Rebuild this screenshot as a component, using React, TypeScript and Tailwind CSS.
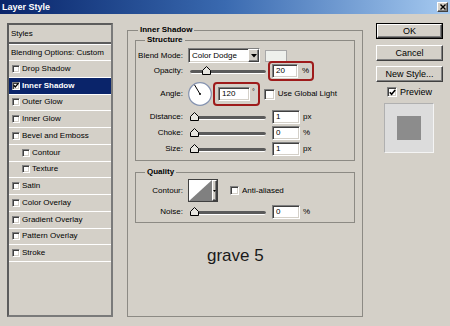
import React from 'react';

const sunken =
  'bg-white border border-t-[#808080] border-l-[#808080] border-r-white border-b-white shadow-[inset_1px_1px_0_#404040,inset_-1px_-1px_0_#d4d0c8]';
const raised =
  'bg-[#d4d0c8] border border-t-white border-l-white border-r-[#404040] border-b-[#404040] shadow-[inset_-1px_-1px_0_#808080]';

const styleRows = [
  { name: 'Drop Shadow' },
  { name: 'Inner Shadow', checked: true, active: true },
  { name: 'Outer Glow' },
  { name: 'Inner Glow' },
  { name: 'Bevel and Emboss' },
  { name: 'Contour', sub: true },
  { name: 'Texture', sub: true },
  { name: 'Satin' },
  { name: 'Color Overlay' },
  { name: 'Gradient Overlay' },
  { name: 'Pattern Overlay' },
  { name: 'Stroke' },
];

function CheckBox({ checked = false, size = 'w-[9px] h-[9px]' }: { checked?: boolean; size?: string }) {
  return (
    <div className={`${sunken} ${size} shrink-0 flex items-center justify-center`}>
      {checked && (
        <svg width="7" height="7" viewBox="0 0 7 7">
          <path d="M0.8 3.2 L2.6 5.2 L6.2 1" fill="none" stroke="#000" strokeWidth="1.6" />
        </svg>
      )}
    </div>
  );
}

function Field({ value, w = 'w-[28px]' }: { value: string; w?: string }) {
  return <div className={`${sunken} ${w} h-[14px] flex items-center pl-[3px] text-[8px] leading-none`}>{value}</div>;
}

function Slider({ pos }: { pos: number }) {
  return (
    <div className="relative h-[10px] w-[76px]">
      <div className="absolute left-0 right-0 top-[4px] h-[4px] rounded-[2px] bg-[#5a5a5a] border-b border-b-white" />
      <svg className="absolute top-[0px]" style={{ left: pos }} width="9" height="9" viewBox="0 0 9 9">
        <path d="M0.5 8.5 V4.5 L4.5 0.5 L8.5 4.5 V8.5 Z" fill="#e8e6e0" stroke="#000" />
      </svg>
    </div>
  );
}

function Row({ label, className = '', children }: { label: string; className?: string; children: React.ReactNode }) {
  return (
    <div className={`flex items-center ${className}`}>
      <div className="w-[47px] text-right shrink-0">{label}</div>
      {children}
    </div>
  );
}

function SliderRow({ label, value, unit, pos = 0, className = '' }: { label: string; value: string; unit: string; pos?: number; className?: string }) {
  return (
    <Row label={label} className={className}>
      <div className="ml-[7px]">
        <Slider pos={pos} />
      </div>
      <div className="ml-[6px]">
        <Field value={value} />
      </div>
      <span className="ml-[3px]">{unit}</span>
    </Row>
  );
}

export default function App() {
  return (
    <div className="w-[450px] h-[326px] bg-[#d4d0c8] text-black text-[8px] leading-[10px] font-['Liberation_Sans',Arial,sans-serif] overflow-hidden">
      {/* title bar */}
      <div className="h-[14px] flex items-center bg-gradient-to-r from-[#0a246a] via-[#3a6ab0] to-[#a6caf0] pl-[2px] pr-[2px]">
        <span className="text-white font-bold text-[9px] leading-none">Layer Style</span>
        <div className={`${raised} ml-auto w-[11px] h-[10px] flex items-center justify-center`}>
          <svg width="6" height="6" viewBox="0 0 6 6">
            <path d="M0.5 0.5 L5.5 5.5 M5.5 0.5 L0.5 5.5" stroke="#000" strokeWidth="1.4" />
          </svg>
        </div>
      </div>

      <div className="flex items-start pl-[7px] pt-[9px]">
        {/* styles list */}
        <div className="w-[106px] h-[294px] border-2 border-[#5c5c5c] border-r-[#7a7a7a] border-b-[#7a7a7a] flex flex-col">
          <div className="h-[19px] flex items-center pl-[2px] border-b-2 border-[#5c5c5c] shadow-[0_1px_0_#fff]">Styles</div>
          <div className="h-[16px] flex items-center pl-[2px] border-b border-white mt-[1px]">Blending Options: Custom</div>
          {styleRows.map((r) => (
            <div
              key={r.name}
              className={`h-[16.75px] flex items-center gap-[2px] border-b border-white ${r.sub ? 'pl-[13px]' : 'pl-[3px]'} ${
                r.active ? 'bg-[#0a246a] text-white font-bold' : ''
              }`}
            >
              <CheckBox checked={r.checked} size="w-[8px] h-[8px]" />
              <span>{r.name}</span>
            </div>
          ))}
        </div>

        {/* main panel */}
        <fieldset className="ml-[14px] mt-[2px] w-[236px] h-[292px] border border-[#8c8a84] px-[7px]">
          <legend className="ml-[3px] px-[2px] font-bold leading-[10px]">Inner Shadow</legend>

          <fieldset className="w-full border border-[#8c8a84]">
            <legend className="ml-[9px] px-[2px] font-bold leading-[10px]">Structure</legend>
            <div className="pt-[3px] pb-[4px] flex flex-col">
              <Row label="Blend Mode:" className="h-[15px]">
                <div className={`${sunken} ml-[5px] w-[72px] h-[15px] flex items-center`}>
                  <span className="pl-[3px] flex-1">Color Dodge</span>
                  <div className={`${raised} w-[11px] h-[13px] flex items-center justify-center`}>
                    <svg width="6" height="4" viewBox="0 0 6 4">
                      <path d="M0 0 H6 L3 3.5 Z" fill="#000" />
                    </svg>
                  </div>
                </div>
                <div className="ml-[5px] w-[22px] h-[12px] border border-[#a8a8a8] bg-[#eef0ec]" />
              </Row>

              <Row label="Opacity:" className="h-[16px]">
                <div className="ml-[7px]">
                  <Slider pos={12} />
                </div>
                <div className="ml-[2px] border-2 border-[#9e1b1b] rounded-[4px] pl-[2px] pr-[3px] py-[1px] flex items-center">
                  <Field value="20" w="w-[26px]" />
                  <span className="ml-[4px]">%</span>
                </div>
              </Row>

              <Row label="Angle:" className="h-[24px] mt-[3px]">
                <svg className="ml-[5px] shrink-0" width="24" height="24" viewBox="0 0 24 24">
                  <circle cx="12" cy="12" r="11.3" fill="#fff" stroke="#8593b0" strokeWidth="1.2" />
                  <path d="M12 12 L6.5 2.8" stroke="#000" strokeWidth="1" />
                  <circle cx="12" cy="12" r="1" fill="#000" />
                </svg>
                <div className="ml-[1px] h-[24px] border-2 border-[#9e1b1b] rounded-[4px] pl-[3px] pr-[3px] flex items-center">
                  <Field value="120" w="w-[32px]" />
                  <span className="ml-[2px] self-start mt-[4px] text-[7px] leading-none">°</span>
                </div>
                <div className="ml-[4px]">
                  <CheckBox size="w-[11px] h-[11px]" />
                </div>
                <span className="ml-[3px] whitespace-nowrap">Use Global Light</span>
              </Row>

              <SliderRow label="Distance:" value="1" unit="px" className="h-[16px] mt-[3px]" />
              <SliderRow label="Choke:" value="0" unit="%" className="h-[16px]" />
              <SliderRow label="Size:" value="1" unit="px" className="h-[15px]" />
            </div>
          </fieldset>

          <fieldset className="w-full mt-[6px] border border-[#8c8a84]">
            <legend className="ml-[9px] px-[2px] font-bold leading-[10px]">Quality</legend>
            <div className="pt-[2px] pb-[3px] flex flex-col">
              <Row label="Contour:" className="h-[23px]">
                <div className="ml-[5px] w-[30px] h-[23px] border border-[#404040] flex bg-white">
                  <svg width="23" height="21" viewBox="0 0 23 21">
                    <path d="M0 21 L23 0 L23 21 Z" fill="#808080" />
                  </svg>
                  <div className={`${raised} flex-1 flex items-center justify-center`}>
                    <svg width="3" height="2" viewBox="0 0 3 2">
                      <path d="M0 0 H3 L1.5 2 Z" fill="#000" />
                    </svg>
                  </div>
                </div>
                <div className="ml-[12px]">
                  <CheckBox size="w-[9px] h-[9px]" />
                </div>
                <span className="ml-[3px]">Anti-aliased</span>
              </Row>
              <SliderRow label="Noise:" value="0" unit="%" className="h-[15px] mt-[2px]" />
            </div>
          </fieldset>

          <div className="mt-[23px] pl-[72px] text-[17px] leading-[20px] text-[#1a1a1a]">grave 5</div>
        </fieldset>

        {/* right column */}
        <div className="ml-[13px] w-[67px] flex flex-col text-[9px]">
          <div className="border border-black">
            <div className={`${raised} h-[14px] flex items-center justify-center`}>OK</div>
          </div>
          <div className={`${raised} mt-[6px] h-[16px] flex items-center justify-center`}>Cancel</div>
          <div className={`${raised} mt-[5px] h-[16px] flex items-center justify-center`}>New Style...</div>
          <div className="mt-[5px] h-[10px] flex items-center pl-[11px]">
            <CheckBox checked size="w-[10px] h-[10px]" />
            <span className="ml-[3px]">Preview</span>
          </div>
          <div className="mt-[6px] ml-[8px] w-[50px] h-[50px] bg-[#dcdcdc] border border-t-[#b0b0b0] border-l-[#b0b0b0] border-r-[#f4f4f4] border-b-[#f4f4f4] flex items-center justify-center">
            <div className="w-[24px] h-[24px] bg-[#8c8c8c]" />
          </div>
        </div>
      </div>
    </div>
  );
}
